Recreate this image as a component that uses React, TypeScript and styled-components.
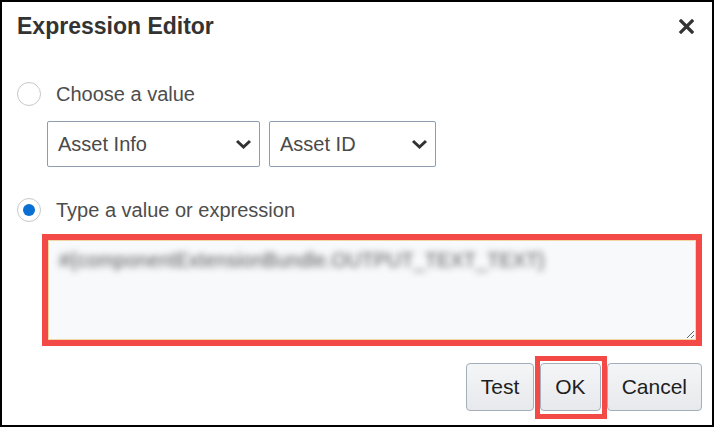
import React from "react";
import styled, { createGlobalStyle } from "styled-components";

const GlobalStyle = createGlobalStyle`
    html, body {
        margin: 0;
        padding: 0;
        background: #ffffff;
    }
    * {
        box-sizing: border-box;
    }
`;

const Dialog = styled.div`
    width: 714px;
    height: 427px;
    border: 2px solid #000000;
    background: #ffffff;
    display: flex;
    flex-direction: column;
    font-family: "Liberation Sans", Arial, sans-serif;
    color: #4a4a4a;
`;

const Header = styled.div`
    display: flex;
    align-items: center;
    justify-content: space-between;
    height: 26px;
    margin-top: 11px;
    padding: 0 17px 0 15px;
`;

const Title = styled.h1`
    margin: 0;
    font-size: 23px;
    font-weight: bold;
    color: #333333;
    line-height: 26px;
`;

const CloseButton = styled.button`
    display: flex;
    align-items: center;
    justify-content: center;
    width: 18px;
    height: 18px;
    padding: 0;
    border: none;
    background: none;
    cursor: pointer;
`;

const Body = styled.div`
    display: flex;
    flex-direction: column;
    padding: 0 10px 0 15px;
`;

const RadioRow = styled.label<{ $top: number }>`
    display: flex;
    align-items: center;
    gap: 15px;
    height: 24px;
    margin-top: ${(p) => p.$top}px;
    font-size: 20px;
    color: #4d4d4d;
    cursor: pointer;
`;

const RadioCircle = styled.span<{ $checked?: boolean }>`
    display: flex;
    align-items: center;
    justify-content: center;
    width: 24px;
    height: 24px;
    border-radius: 50%;
    border: 1.5px solid #c6c8ca;
    background: #ffffff;

    &::after {
        content: "";
        width: 12px;
        height: 12px;
        border-radius: 50%;
        background: ${(p) => (p.$checked ? "#0a6fd3" : "transparent")};
    }
`;

const SelectRow = styled.div`
    display: flex;
    gap: 9px;
    margin: 15px 0 0 30px;
`;

const SelectBox = styled.div<{ $width: number }>`
    display: flex;
    align-items: center;
    justify-content: space-between;
    width: ${(p) => p.$width}px;
    height: 46px;
    padding: 0 7px 0 10px;
    border: 1px solid #8e9eae;
    border-radius: 2px;
    background: #ffffff;
    font-size: 20px;
    color: #4a4a4a;
`;

const TextFrame = styled.div`
    margin: 12px 0 0 25px;
    height: 112px;
    border: 6px solid #f44a47;
    display: flex;
`;

const ExpressionInput = styled.textarea`
    flex: 1;
    margin: 0;
    padding: 8px 10px;
    border: 1px solid #f2d7a6;
    background: #f8f9fb;
    font-family: "Liberation Sans", Arial, sans-serif;
    font-size: 20px;
    color: transparent;
    text-shadow: 0 0 6px rgba(50, 50, 50, 0.8);
    resize: both;
    outline: none;
`;

const Footer = styled.div`
    display: flex;
    justify-content: flex-end;
    gap: 6px;
    margin-top: 17px;
`;

const Button = styled.button`
    height: 48px;
    padding: 0 14px;
    border: 1px solid #a3afbb;
    border-radius: 4px;
    background: linear-gradient(#f4f5f7, #e7e9ec);
    font-family: "Liberation Sans", Arial, sans-serif;
    font-size: 21px;
    color: #1e1e1e;
    cursor: pointer;
`;

const Highlight = styled.span`
    position: relative;
    display: flex;

    &::after {
        content: "";
        position: absolute;
        top: -7px;
        bottom: -8px;
        left: -5px;
        right: -6px;
        border: 5px solid #f44a47;
        pointer-events: none;
    }
`;

const Chevron = () => (
    <svg width="17" height="10" viewBox="0 0 17 10">
        <polyline points="2,2 8.5,8 15,2" fill="none" stroke="#333" strokeWidth="3" />
    </svg>
);

const Select = ({ label, width }: { label: string; width: number }) => (
    <SelectBox $width={width}>
        <span>{label}</span>
        <Chevron />
    </SelectBox>
);

export default function App() {
    return (
        <>
            <GlobalStyle />
            <Dialog>
                <Header>
                    <Title>Expression Editor</Title>
                    <CloseButton aria-label="Close">
                        <svg width="15" height="15" viewBox="0 0 15 15">
                            <path d="M2 2 L13 13 M13 2 L2 13" stroke="#333" strokeWidth="3.2" strokeLinecap="square" />
                        </svg>
                    </CloseButton>
                </Header>
                <Body>
                    <RadioRow $top={43}>
                        <RadioCircle />
                        Choose a value
                    </RadioRow>
                    <SelectRow>
                        <Select label="Asset Info" width={213} />
                        <Select label="Asset ID" width={167} />
                    </SelectRow>
                    <RadioRow $top={31}>
                        <RadioCircle $checked />
                        Type a value or expression
                    </RadioRow>
                    <TextFrame>
                        <ExpressionInput
                            defaultValue="#{componentExtensionBundle.OUTPUT_TEXT_TEXT}"
                            spellCheck={false}
                        />
                    </TextFrame>
                    <Footer>
                        <Button>Test</Button>
                        <Highlight>
                            <Button>OK</Button>
                        </Highlight>
                        <Button>Cancel</Button>
                    </Footer>
                </Body>
            </Dialog>
        </>
    );
}
